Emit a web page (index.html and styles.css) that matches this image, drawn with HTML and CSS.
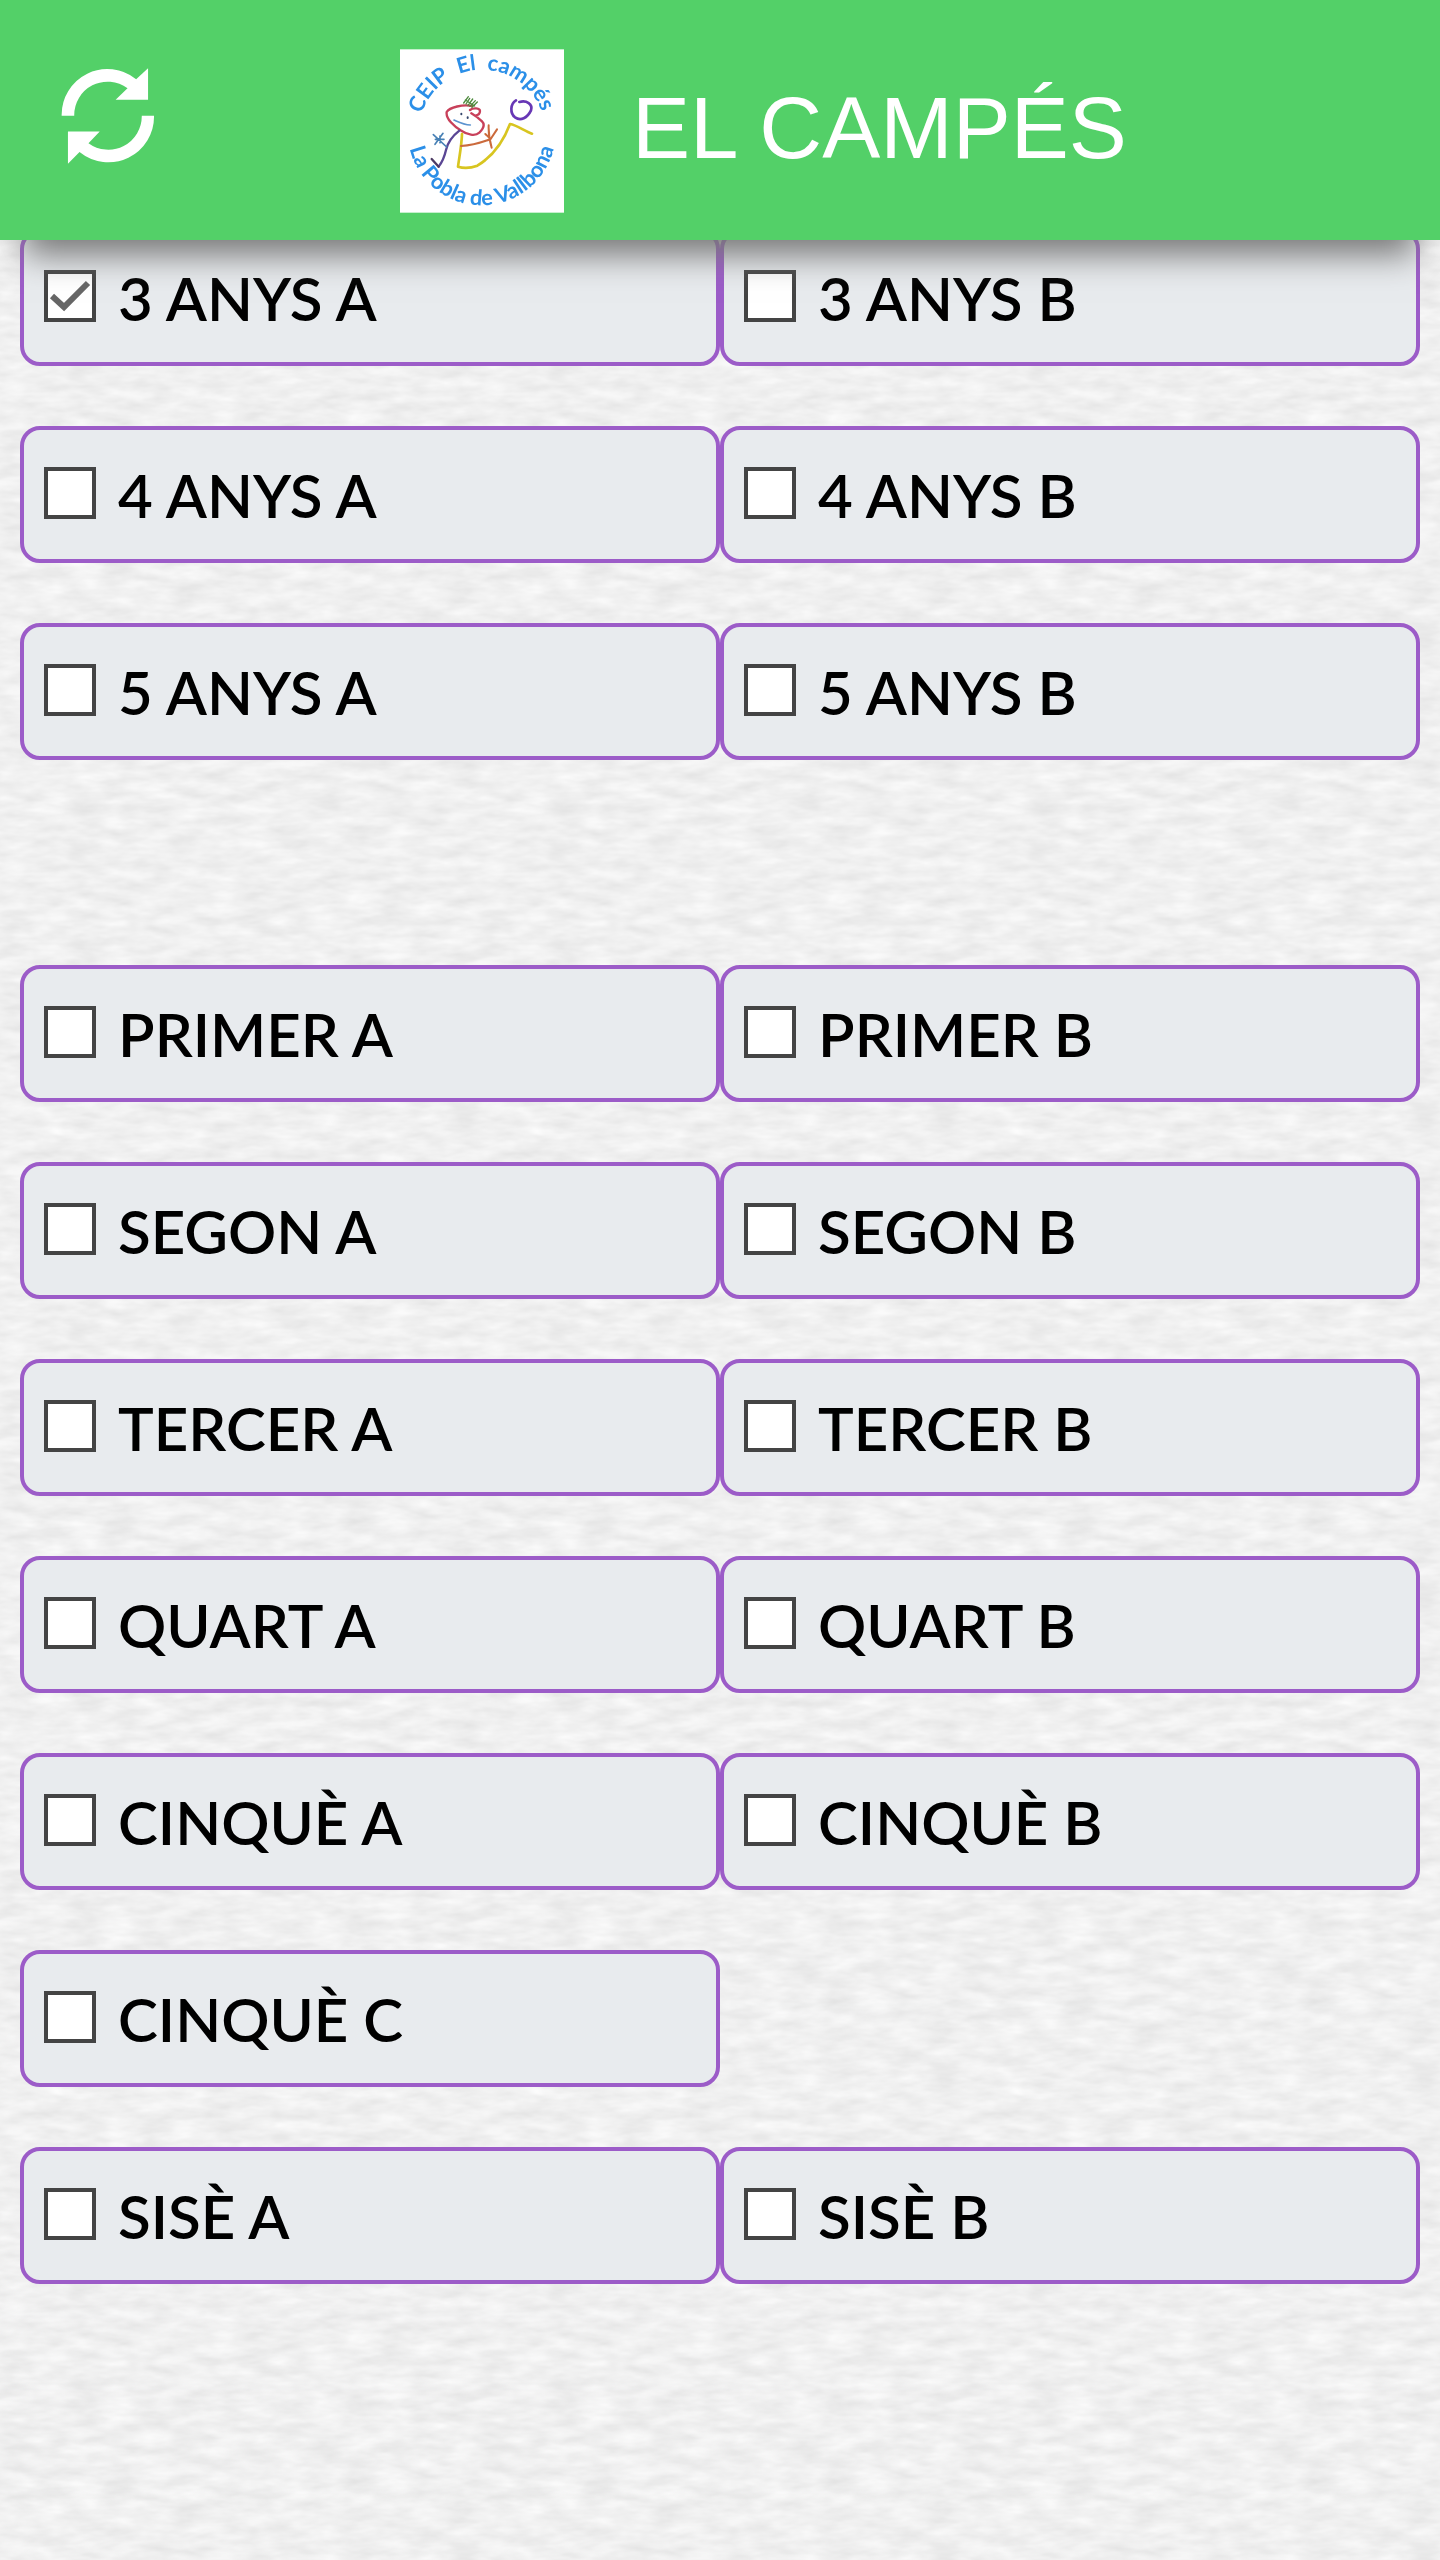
FILE: index.html
```
<!DOCTYPE html>
<html lang="ca">
<head>
  <meta charset="UTF-8">
  <meta name="viewport" content="width=device-width, initial-scale=1">
  <title>El Campés</title>
  <link rel="stylesheet" href="styles.css">
</head>
<body>

<header class="topbar">
  <button class="refresh" type="button" aria-label="Actualitzar">
    <svg viewBox="94 84 282 290" fill="#fff">
      <path d="M95 228A138 138 0 0 1 320 118L356 85V180H258L294 145A101 101 0 0 0 133 228Z"/>
      <path d="M374 228A138 138 0 0 1 149 338L114 373V276H210L176 311A101 101 0 0 0 337 228Z"/>
    </svg>
  </button>
  <svg class="logo" viewBox="60 58 492 490" role="img" aria-label="CEIP El Campés">
    <defs>
      <path id="arcTop" d="M125 252A190 190 0 0 1 496 300"/>
      <path id="arcBottom" d="M89 355A222 222 0 0 0 527 310"/>
    </defs>
    <rect x="60" y="58" width="492" height="490" fill="#fff"/>
    <text class="logo-top"><textPath href="#arcTop">CEIP  El  campés</textPath></text>
    <text class="logo-bottom"><textPath href="#arcBottom">La Pobla de Vallbona</textPath></text>
    <g fill="none" stroke-width="7" stroke-linecap="round" stroke-linejoin="round">
      <path stroke="#c8405a" d="M276 228C250 222 208 232 200 246C197 266 222 290 244 302C262 314 285 320 298 308C308 298 316 284 306 274C296 264 284 256 274 250M270 240C280 232 300 234 300 243C300 252 292 256 286 257"/>
      <path stroke="#4d8a3c" stroke-width="4" d="M251 219L265 200M258 222L269 205M264 226L278 207M270 229L286 212M276 232L292 216M256 210L284 228"/>
      <path stroke="#5b93cf" stroke-width="5" d="M222 270C238 277 252 284 271 285"/>
      <path stroke="#35466b" stroke-width="6" d="M244 251V253M263 262V264"/>
      <path stroke="#5a4694" d="M238 302C220 316 203 338 198 360C194 378 188 394 176 410"/>
      <path stroke="#4c3a63" d="M176 410L155 387"/>
      <path stroke="#4780b5" stroke-width="5" d="M160 314L200 351M189 310L165 343M180 318V338M166 328H192"/>
      <path stroke="#d8c520" stroke-width="8" d="M246 312C245 345 238 380 234 410C254 416 278 412 292 407C340 378 372 330 390 282C412 286 434 304 456 311"/>
      <path stroke="#cb6a3c" stroke-width="6" d="M243 348C276 346 306 337 332 327M326 286C325 310 329 332 335 353M351 298L332 327L316 312"/>
      <path stroke="#6737b5" stroke-width="8" d="M408 211C390 222 390 250 405 262C422 274 442 264 453 241C459 222 440 210 418 216"/>
    </g>
  </svg>
  <h1 class="title">EL CAMPÉS</h1>
</header>

<main class="classes">
  <div class="group">
    <label class="item"><input type="checkbox" checked><span>3 ANYS A</span></label>
    <label class="item"><input type="checkbox"><span>3 ANYS B</span></label>
    <label class="item"><input type="checkbox"><span>4 ANYS A</span></label>
    <label class="item"><input type="checkbox"><span>4 ANYS B</span></label>
    <label class="item"><input type="checkbox"><span>5 ANYS A</span></label>
    <label class="item"><input type="checkbox"><span>5 ANYS B</span></label>
  </div>

  <div class="group">
    <label class="item"><input type="checkbox"><span>PRIMER A</span></label>
    <label class="item"><input type="checkbox"><span>PRIMER B</span></label>
    <label class="item"><input type="checkbox"><span>SEGON A</span></label>
    <label class="item"><input type="checkbox"><span>SEGON B</span></label>
    <label class="item"><input type="checkbox"><span>TERCER A</span></label>
    <label class="item"><input type="checkbox"><span>TERCER B</span></label>
    <label class="item"><input type="checkbox"><span>QUART A</span></label>
    <label class="item"><input type="checkbox"><span>QUART B</span></label>
    <label class="item"><input type="checkbox"><span>CINQUÈ A</span></label>
    <label class="item"><input type="checkbox"><span>CINQUÈ B</span></label>
    <label class="item"><input type="checkbox"><span>CINQUÈ C</span></label>
    <label class="item first"><input type="checkbox"><span>SISÈ A</span></label>
    <label class="item"><input type="checkbox"><span>SISÈ B</span></label>
  </div>
</main>

</body>
</html>
```
FILE: styles.css
```
* {
  box-sizing: border-box;
}

body {
  margin: 0;
  min-height: 100vh;
  font-family: Lato, sans-serif;
  color: #000;
  background-color: #f0f0f0;
  /* paper grain */
  background-image: url("data:image/svg+xml,%3Csvg xmlns='http://www.w3.org/2000/svg' width='480' height='480'%3E%3Cfilter id='p' x='0' y='0' width='100%25' height='100%25' color-interpolation-filters='sRGB'%3E%3CfeTurbulence type='fractalNoise' baseFrequency='.03 .09' numOctaves='3' seed='4' stitchTiles='stitch'/%3E%3CfeColorMatrix values='.11 0 0 0 .886 .11 0 0 0 .886 .11 0 0 0 .886 0 0 0 0 1'/%3E%3C/filter%3E%3Crect width='480' height='480' filter='url(%23p)'/%3E%3C/svg%3E");
}

.topbar {
  position: fixed;
  top: 0;
  left: 0;
  right: 0;
  z-index: 10;
  height: 240px;
  padding: 0 60px;
  display: flex;
  align-items: center;
  background: #53d068;
  box-shadow: 0 40px 32px -25px #777;
}

.refresh {
  width: 96px;
  height: 96px;
  margin-bottom: 8px;
  padding: 0;
  border: none;
  background: none;
  cursor: pointer;
}

.refresh svg {
  display: block;
  width: 100%;
  height: 100%;
}

.logo {
  width: 164px;
  height: 164px;
  margin: 22px 68px 0 244px;
}

.logo text {
  font-family: Lato, sans-serif;
  font-size: 65px;
  font-weight: 700;
  fill: #2b8fe8;
  white-space: pre;
}

.title {
  margin: 16px 0 0;
  font-family: "Liberation Sans", Arial, sans-serif;
  font-size: 87px;
  font-weight: 400;
  line-height: 96px;
  color: #fff;
}

.classes {
  padding: 229px 20px 60px;
}

.group {
  display: grid;
  grid-template-columns: 1fr 1fr;
  row-gap: 60px;
}

.group + .group {
  margin-top: 205px;
}

.item {
  display: flex;
  align-items: center;
  gap: 22px;
  min-height: 137px;
  padding: 0 20px;
  border: 4px solid #9c5cc8;
  border-radius: 20px;
  background: #e8ebee;
  font-size: 60px;
  font-weight: 600;
  line-height: 72px;
  cursor: pointer;
}

/* starts a new row, even when the one above is not full */
.item.first {
  grid-column: 1;
}

.item input {
  appearance: none;
  flex: none;
  width: 52px;
  height: 52px;
  margin: 0 0 4px;
  border: 4px solid #444;
  background: #fff center / contain no-repeat;
}

.item input:checked {
  background-image: url("data:image/svg+xml,%3Csvg xmlns='http://www.w3.org/2000/svg' viewBox='0 0 44 44'%3E%3Cpath d='M4 22L16 33L40 9' fill='none' stroke='%23666' stroke-width='6'/%3E%3C/svg%3E");
}
```
